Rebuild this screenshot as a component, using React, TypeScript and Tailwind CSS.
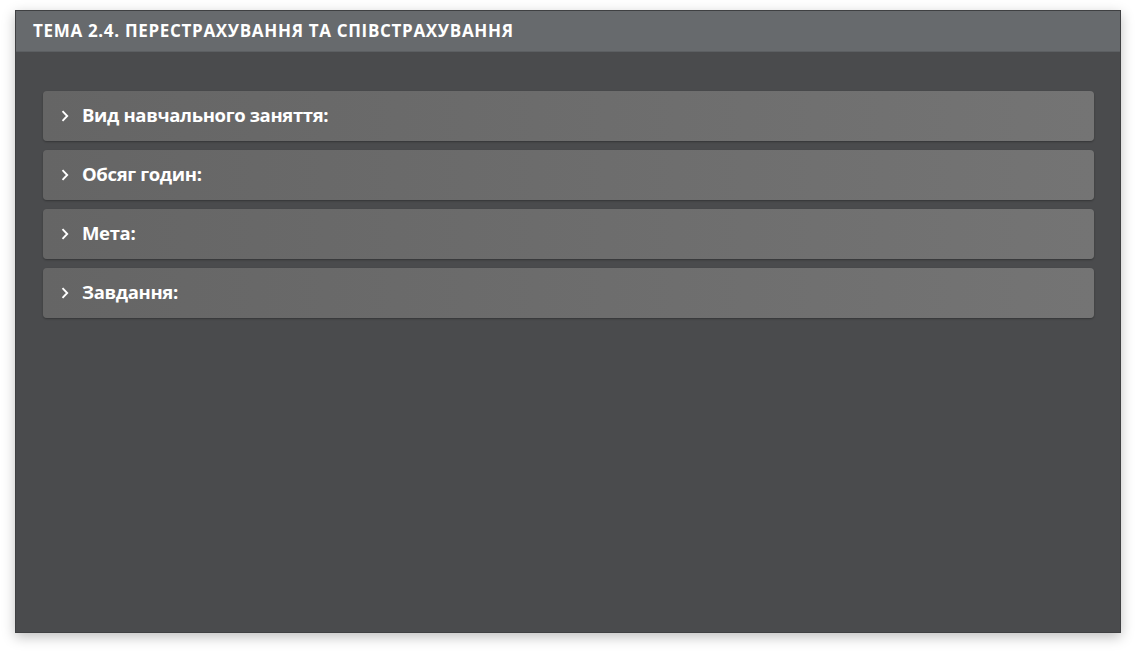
import React from "react";

const items = ["Вид навчального заняття:", "Обсяг годин:", "Мета:", "Завдання:"];

function Chevron() {
  return (
    <svg width="8" height="12" viewBox="0 0 8 12" className="shrink-0">
      <path d="M1.5 1.2 L6.2 6 L1.5 10.8" fill="none" stroke="#ffffff" strokeWidth="1.9" />
    </svg>
  );
}

export default function App() {
  return (
    <div className="w-[1136px] h-[653px] bg-white pt-[10px] pl-[15px]" style={{ fontFamily: '"Open Sans", "Noto Sans", sans-serif' }}>
      <div className="w-[1106px] h-[623px] bg-[#4a4b4d] border border-[#3f4042] shadow-[0_4px_12px_rgba(0,0,0,0.25)] flex flex-col">
        <div className="h-[41px] bg-[#676a6d] flex items-center pl-[17px] border-b border-[#5c5f62]">
          <span className="text-white font-bold text-[17px] tracking-[0.68px]">ТЕМА 2.4. ПЕРЕСТРАХУВАННЯ ТА СПІВСТРАХУВАННЯ</span>
        </div>
        <div className="pt-[39px] pl-[27px] pr-[26px] flex flex-col gap-[9px]">
          {items.map((t) => (
            <div
              key={t}
              className="h-[50px] rounded-[4px] bg-gradient-to-r from-[#656565] to-[#747474] shadow-[0_1px_2px_rgba(0,0,0,0.3)] flex items-center pl-[18px] gap-[13px]"
            >
              <Chevron />
              <span className="text-white font-bold text-[18.5px] tracking-[-0.35px] leading-none pb-[1px]">{t}</span>
            </div>
          ))}
        </div>
      </div>
    </div>
  );
}
